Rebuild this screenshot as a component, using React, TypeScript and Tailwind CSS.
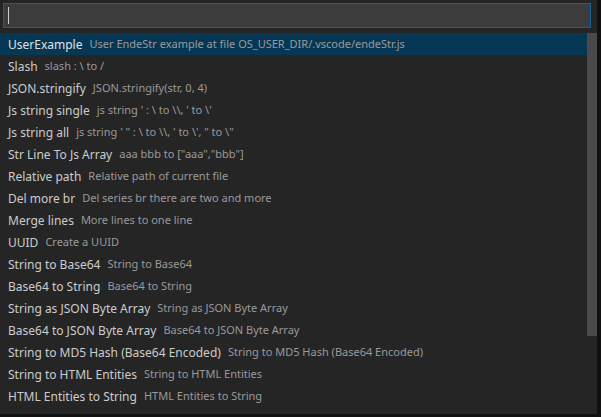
const items: [string, string][] = [
  ["UserExample", "User EndeStr example at file OS_USER_DIR/.vscode/endeStr.js"],
  ["Slash", "slash : \\ to /"],
  ["JSON.stringify", "JSON.stringify(str, 0, 4)"],
  ["Js string single", "js string ' : \\ to \\\\, ' to \\'"],
  ["Js string all", "js string ' \" : \\ to \\\\, ' to \\', \" to \\\""],
  ["Str Line To Js Array", "aaa bbb to [\"aaa\",\"bbb\"]"],
  ["Relative path", "Relative path of current file"],
  ["Del more br", "Del series br there are two and more"],
  ["Merge lines", "More lines to one line"],
  ["UUID", "Create a UUID"],
  ["String to Base64", "String to Base64"],
  ["Base64 to String", "Base64 to String"],
  ["String as JSON Byte Array", "String as JSON Byte Array"],
  ["Base64 to JSON Byte Array", "Base64 to JSON Byte Array"],
  ["String to MD5 Hash (Base64 Encoded)", "String to MD5 Hash (Base64 Encoded)"],
  ["String to HTML Entities", "String to HTML Entities"],
  ["HTML Entities to String", "HTML Entities to String"],
];

const App = () => {
  return (
    <div className="w-[601px] h-[417px] bg-[#111111] flex overflow-hidden font-['Noto_Sans',sans-serif]">
      <div className="w-[597px] h-[414px] bg-[#252526] flex flex-col">
        <div className="pt-[3px] pl-[3px] pr-[6px] pb-[5px]">
          <div className="h-[25px] bg-[#3c3c3c] border border-[#0e639c] flex items-center pl-[4px]">
            <div className="w-px h-[17px] bg-[#cccccc]" />
          </div>
        </div>
        <div className="flex flex-1 min-h-0">
          <div className="flex-1 flex flex-col">
            {items.map(([label, desc], i) => (
              <div
                key={label}
                className={`h-[22px] flex items-center pl-[8px] pt-px whitespace-nowrap ${
                  i === 0 ? "bg-[#063856]" : ""
                }`}
              >
                <span className={`text-[12px] ${i === 0 ? "text-[#e0e0e0]" : "text-[#cccccc]"}`}>
                  {label}
                </span>
                <span className="text-[11px] text-[#9a9a9a] ml-[7px]">{desc}</span>
              </div>
            ))}
          </div>
          <div className="w-[10px] flex flex-col">
            <div className="h-[303px] bg-[#4a4a4a]" />
          </div>
        </div>
      </div>
    </div>
  );
};

export default App;
